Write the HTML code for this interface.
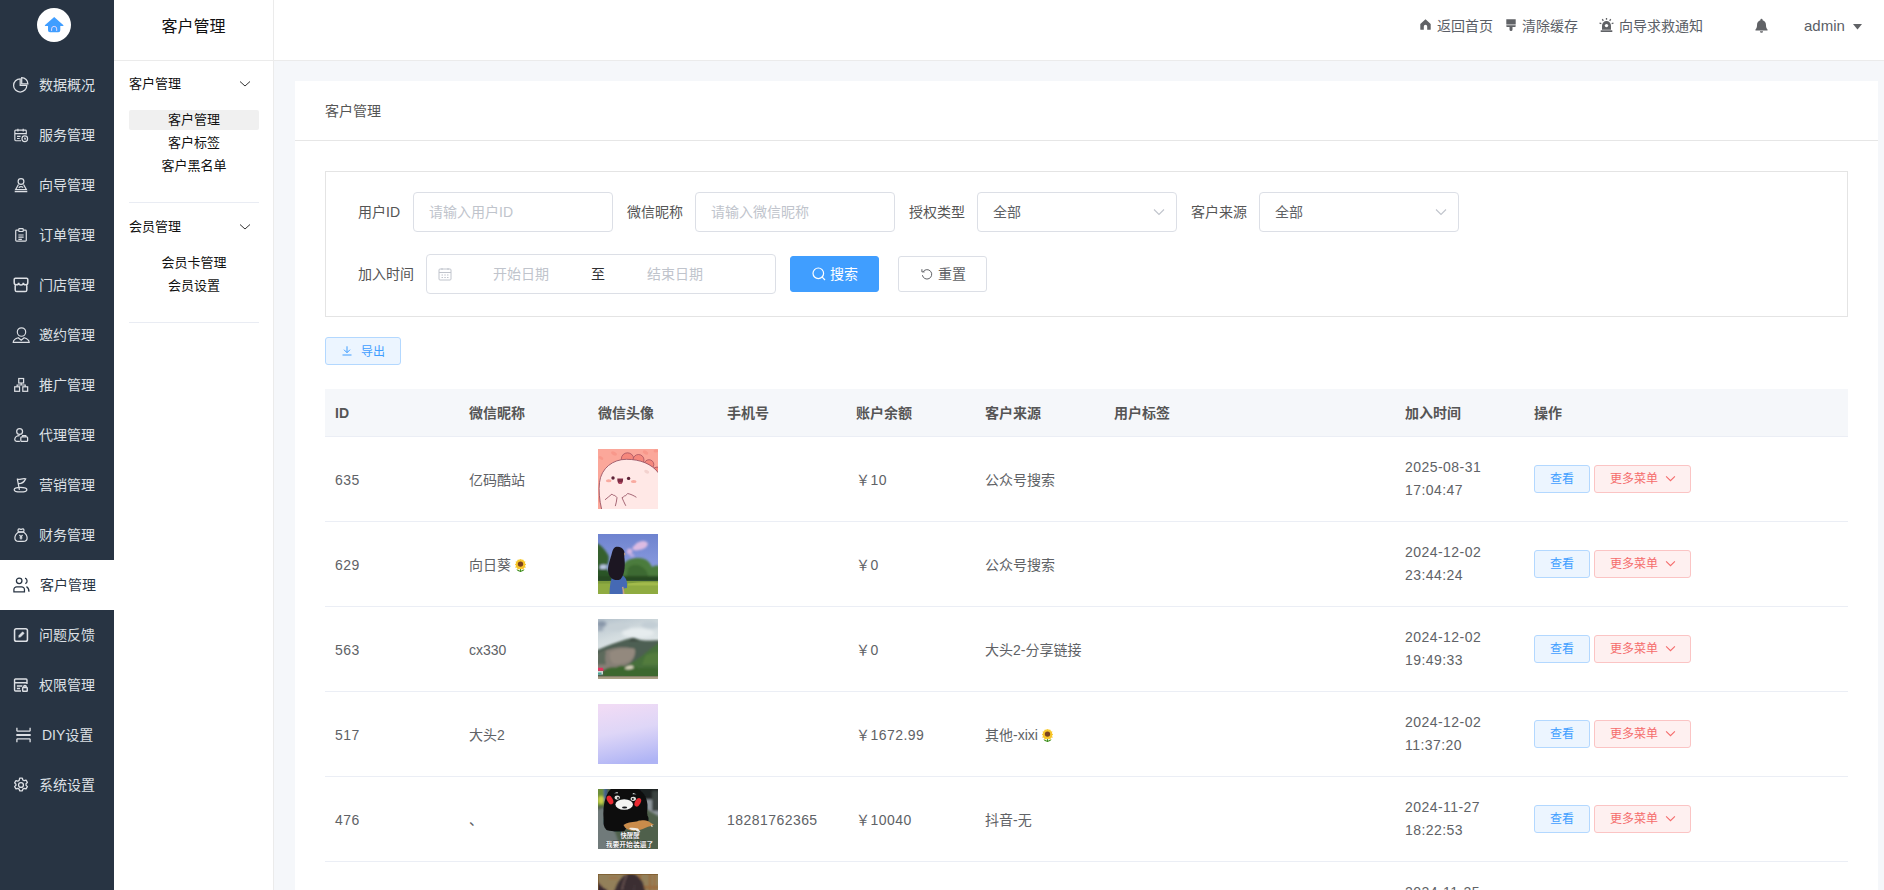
<!DOCTYPE html>
<html lang="zh-CN">
<head>
<meta charset="utf-8">
<title>客户管理</title>
<style>
*{box-sizing:border-box;}
html,body{margin:0;padding:0;}
body{width:1884px;height:890px;overflow:hidden;position:relative;background:#f5f7fa;
 font-family:"Liberation Sans","Noto Sans CJK SC",sans-serif;font-size:14px;color:#606266;}
/* ---------- left dark sidebar ---------- */
#side{position:absolute;left:0;top:0;width:114px;height:890px;background:#283443;}
#logo{position:absolute;left:37px;top:8px;width:34px;height:34px;border-radius:50%;background:#fff;}
#logo svg{position:absolute;left:8px;top:8px;}
.nav{position:absolute;left:0;width:114px;height:50px;color:#dde0e5;font-size:14px;line-height:50px;white-space:nowrap;}
.nav.on{background:#fff;color:#283443;}
.nav svg{position:absolute;left:12px;top:16px;width:18px;height:18px;}
.nav span{position:absolute;left:39px;top:0;}
/* ---------- sub sidebar ---------- */
#sub{position:absolute;left:114px;top:0;width:160px;height:890px;background:#fff;border-right:1px solid #ebebeb;}
#sub .ttl{height:61px;line-height:54px;text-align:center;font-size:16px;color:#111;border-bottom:1px solid #ebebeb;}
.grp{margin:0 14px 0 15px;border-bottom:1px solid #e9ecf3;padding-bottom:23px;}
.grp .gt{height:48px;line-height:48px;font-size:13px;color:#111;position:relative;margin-bottom:2px;}
.grp .gt svg{position:absolute;right:8px;top:20px;}
.ttl + .grp{margin-top:-1px;}
.grp .it{height:20px;line-height:20px;margin-bottom:3px;text-align:center;font-size:13px;color:#111;border-radius:2px;}
.grp .it.on{background:#f0f0f0;}
/* ---------- header ---------- */
#hd{position:absolute;left:274px;top:0;width:1610px;height:61px;background:#fff;border-bottom:1px solid #ebebeb;}
#hd .h{position:absolute;top:0;height:52px;line-height:52px;font-size:14px;color:#5a5e66;white-space:nowrap;}
#hd svg{position:absolute;}
/* ---------- card ---------- */
#card{position:absolute;left:295px;top:81px;width:1583px;height:820px;background:#fff;}
#card .ch{height:60px;line-height:60px;padding-left:30px;border-bottom:1px solid #e6e6e6;font-size:14px;color:#555;}
#fbox{position:absolute;left:30px;top:90px;width:1523px;height:146px;border:1px solid #e4e4e4;}
.lb{position:absolute;height:40px;line-height:40px;font-size:14px;color:#555;white-space:nowrap;}
.inp{position:absolute;height:40px;width:200px;border:1px solid #dcdfe6;border-radius:4px;background:#fff;line-height:38px;padding-left:15px;font-size:14px;color:#c0c4cc;white-space:nowrap;}
.inp.sel{color:#606266;}
.inp svg{position:absolute;}
.btn{position:absolute;height:36px;border-radius:3px;font-size:14px;line-height:34px;white-space:nowrap;}
#exp{position:absolute;left:30px;top:256px;width:76px;height:28px;border:1px solid #b3d8ff;background:#ecf5ff;border-radius:3px;color:#409eff;font-size:12px;line-height:26px;}
#exp svg{position:absolute;left:16px;top:8px;}
#exp span{position:absolute;left:35px;top:1px;}
/* ---------- table ---------- */
#tb{position:absolute;left:30px;top:308px;width:1523px;}
.th{height:48px;background:#f5f7fa;border-bottom:1px solid #ebeef5;position:relative;font-weight:bold;color:#555;font-size:14px;line-height:49px;}
.tr{height:85px;border-bottom:1px solid #ebeef5;position:relative;font-size:14px;color:#606266;line-height:86px;}
.c{position:absolute;top:0;white-space:nowrap;}
.c1{left:10px}.c2{left:144px}.c3{left:273px}.c4{left:402px}.c5{left:531px}.c6{left:660px}.c7{left:789px}.c8{left:1080px}.c9{left:1209px}
.tr .c8{line-height:23px;top:19px;}
.sun{vertical-align:-2.500px;margin-left:4px;}
.n{letter-spacing:.45px;}
.av{position:absolute;left:273px;top:12px;width:60px;height:60px;overflow:hidden;}
.b1,.b2{position:absolute;top:28px;height:28px;border-radius:3px;font-size:12px;line-height:26px;text-align:center;}
.b1{left:1209px;width:56px;background:#ecf5ff;border:1px solid #b3d8ff;color:#409eff;}
.b2{left:1269px;width:97px;background:#fef0f0;border:1px solid #fbc4c4;color:#f56c6c;padding-right:17px;}
.b2 svg{position:absolute;right:14px;top:7px;width:11px;height:11px;}
</style>
</head>
<body>
<div id="side">
<div id="logo"><svg width="34" height="34" viewBox="0 0 34 34" style="left:0;top:0"><path d="M17.200 9L26.200 17a.55.55 0 0 1-.4 1H23.300v4.300a2 2 0 0 1-2 2H13a2 2 0 0 1-2-2V18H8.500a.55.55 0 0 1-.4-1z" fill="#409eff"/><path d="M14.600 22.900v-2a2.550 2.550 0 0 1 5.100 0v2" fill="none" stroke="#e3d8fb" stroke-width="1"/></svg></div>
<div class="nav" style="top:60px"><svg viewBox="0 0 18 18" style="left:12px" fill="none" stroke="currentColor" stroke-width="1.25"><g transform="translate(9 9) scale(1) translate(-9 -9)"><path d="M8.200 2.800A6.600 6.600 0 1 0 14.800 9.400H8.200z"/><path d="M9.700 1.700A6.200 6.200 0 0 1 15.900 7.900H9.700z"/></g></svg><span style="left:39px">数据概况</span></div>
<div class="nav" style="top:110px"><svg viewBox="0 0 18 18" style="left:12px" fill="none" stroke="currentColor" stroke-width="1.35"><g transform="translate(9 9) scale(0.88) translate(-9 -9)"><path d="M9 15.5H3a1 1 0 0 1-1-1V4.5a1 1 0 0 1 1-1h11a1 1 0 0 1 1 1V8.5M2 7.5h13M5.5 2v3M11.5 2v3M4.5 10.5h4M4.5 13h3"/><circle cx="13.3" cy="13.3" r="3.2"/><path d="M13.3 11.8v1.7h1.4"/></g></svg><span style="left:39px">服务管理</span></div>
<div class="nav" style="top:160px"><svg viewBox="0 0 18 18" style="left:12px" fill="none" stroke="currentColor" stroke-width="1.35"><g transform="translate(9 9) scale(0.9) translate(-9 -9)"><circle cx="9" cy="5" r="3.2"/><path d="M6.2 8.5L3 14.2h12L11.8 8.5M2 16.3h14M6.5 12c1.2-1.2 3-1.6 5-.3"/></g></svg><span style="left:39px">向导管理</span></div>
<div class="nav" style="top:210px"><svg viewBox="0 0 18 18" style="left:12px" fill="none" stroke="currentColor" stroke-width="1.35"><g transform="translate(9 9) scale(0.88) translate(-9 -9)"><path d="M6.5 3.5H4a1 1 0 0 0-1 1V15a1 1 0 0 0 1 1h10a1 1 0 0 0 1-1V4.5a1 1 0 0 0-1-1h-2.5"/><rect x="6.5" y="1.8" width="5" height="3.2" rx=".6"/><path d="M6 9h6M6 11.5h6M6 14h4"/></g></svg><span style="left:39px">订单管理</span></div>
<div class="nav" style="top:260px"><svg viewBox="0 0 18 18" style="left:12px" fill="none" stroke="currentColor" stroke-width="1.5"><g transform="translate(9 9) scale(1) translate(-9 -9)"><path d="M2.2 3.5a1.2 1.2 0 0 1 1.2-1.2h11.2a1.2 1.2 0 0 1 1.2 1.2v3a2.2 2.2 0 0 1-4.5.2 2.3 2.3 0 0 1-4.6 0 2.2 2.2 0 0 1-4.5-.2zM3.2 8.5V14a1.6 1.6 0 0 0 1.6 1.6h8.4a1.6 1.6 0 0 0 1.6-1.6V8.5"/></g></svg><span style="left:39px">门店管理</span></div>
<div class="nav" style="top:310px"><svg viewBox="0 0 18 18" style="left:12px" fill="none" stroke="currentColor" stroke-width="1.15"><g transform="translate(9 9) scale(1) translate(-9 -9)"><circle cx="9.5" cy="6" r="4.2"/><path d="M1.5 16.3c.3-2.6 2.6-4 5-4.6l3 2.6 3-2.6c2.4.6 4.7 2 5 4.6z" transform="translate(-.3 0)"/></g></svg><span style="left:39px">邀约管理</span></div>
<div class="nav" style="top:360px"><svg viewBox="0 0 18 18" style="left:12px" fill="none" stroke="currentColor" stroke-width="1.35"><g transform="translate(9 9) scale(0.9) translate(-9 -9)"><rect x="6.5" y="1.8" width="5.4" height="5"/><rect x="2" y="11" width="5.4" height="5"/><rect x="11" y="11" width="5.4" height="5"/><path d="M9.2 6.8v2.2M4.7 11V9h9v2"/></g></svg><span style="left:39px">推广管理</span></div>
<div class="nav" style="top:410px"><svg viewBox="0 0 18 18" style="left:12px" fill="none" stroke="currentColor" stroke-width="1.35"><g transform="translate(9 9) scale(0.92) translate(-9 -9)"><circle cx="7.5" cy="5.2" r="3.2"/><path d="M7.5 9.6c-3 0-5.3 1.9-5.3 4.4 0 1 .8 1.8 2 1.8h3.6"/><rect x="8.8" y="11" width="7.4" height="5" rx="1"/><path d="M10.8 11V9.8h3.4V11"/></g></svg><span style="left:39px">代理管理</span></div>
<div class="nav" style="top:460px"><svg viewBox="0 0 18 18" style="left:12px" fill="none" stroke="currentColor" stroke-width="1.35"><g transform="translate(9 9) scale(0.93) translate(-9 -9)"><ellipse cx="8.5" cy="14" rx="6.8" ry="2.4"/><path d="M7.3 14.3L5 2.2M5 2.6c2.5 1.6 5 -1.2 9-.2-1.2 2.4-3 5.4-7.600 5.200"/></g></svg><span style="left:39px">营销管理</span></div>
<div class="nav" style="top:510px"><svg viewBox="0 0 18 18" style="left:12px" fill="none" stroke="currentColor" stroke-width="1.35"><g transform="translate(9 9) scale(0.9) translate(-9 -9)"><path d="M6.300 5.800C3.800 7.500 2.200 10 2.200 12.400c0 2.400 1.800 3.800 4.300 3.800h5c2.500 0 4.300-1.400 4.300-3.800 0-2.400-1.600-4.900-4.100-6.600z"/><path d="M6.200 5.600c-.9-1.600-.6-3.400 .8-3.400.8 0 1.200.6 2 .6s1.200-.6 2-.6c1.400 0 1.700 1.800.8 3.400z"/><path d="M7.300 9l1.700 2 1.700-2M9 11v3M7.500 12.300h3"/></g></svg><span style="left:39px">财务管理</span></div>
<div class="nav on" style="top:560px"><svg viewBox="0 0 18 18" style="left:12px" fill="none" stroke="currentColor" stroke-width="1.3"><g transform="translate(9 9) scale(0.96) translate(-9 -9)"><circle cx="7.100" cy="4.700" r="2.900"/><path d="M1.600 16.100v-2.300a2.900 2.900 0 0 1 2.900-2.900h5.200a2.900 2.900 0 0 1 2.900 2.900v2.300z"/><path d="M13.200 1.900c2.800 1 2.800 4.700 .3 5.600M14.700 10.700c1.700.9 2.600 2.600 2.600 5.300"/></g></svg><span style="left:40px">客户管理</span></div>
<div class="nav" style="top:610px"><svg viewBox="0 0 18 18" style="left:12px" fill="none" stroke="currentColor" stroke-width="1.7"><g transform="translate(9 9) scale(0.92) translate(-9 -9)"><rect x="2" y="2.200" width="14" height="13.600" rx="2"/><path d="M6.500 11.500l.5-2.200 3.800-3.800 1.700 1.700-3.800 3.800z" fill="currentColor" stroke-width=".6"/></g></svg><span style="left:39px">问题反馈</span></div>
<div class="nav" style="top:660px"><svg viewBox="0 0 18 18" style="left:12px" fill="none" stroke="currentColor" stroke-width="1.55"><g transform="translate(9 9) scale(0.92) translate(-9 -9)"><path d="M9 15.500H3a1 1 0 0 1-1-1V3.500a1 1 0 0 1 1-1h11.500a1 1 0 0 1 1 1V8M2 6.500h13.500M4.500 10h6M4.500 12.800h3.500"/><rect x="10.800" y="11.800" width="5" height="4" rx=".6"/><path d="M12 11.800v-1a1.300 1.300 0 0 1 2.600 0v1"/></g></svg><span style="left:39px">权限管理</span></div>
<div class="nav" style="top:710px"><svg viewBox="0 0 18 18" style="left:14px" fill="none" stroke="currentColor" stroke-width="1.35"><g transform="translate(9 9) scale(1) translate(-9 -9)"><path d="M2.900 1.800V5.200M16.100 1.800V5.200M2.900 5.200H16.100M2.900 12.800H16.100M2.900 12.800V16.200M16.100 12.800V16.200" stroke-width="1.300"/><path d="M2.300 9H16.700" stroke-width="2"/></g></svg><span style="left:42px">DIY设置</span></div>
<div class="nav" style="top:760px"><svg viewBox="0 0 18 18" style="left:12px" fill="none" stroke="currentColor" stroke-width="1.35"><g transform="translate(9 9) scale(0.95) translate(-9 -9)"><circle cx="9" cy="9" r="2.600"/><path d="M7.600 1.800h2.800l.5 1.900 1.500.8 1.900-.6 1.400 2.400-1.400 1.400v1.600l1.400 1.400-1.400 2.400-1.900-.6-1.500.8-.5 1.900H7.600l-.5-1.900-1.500-.8-1.900.6-1.400-2.400 1.400-1.400V8.200L2.300 6.800l1.400-2.400 1.900.6 1.500-.8z" stroke-linejoin="round"/></g></svg><span style="left:39px">系统设置</span></div>
</div>
<div id="sub">
  <div class="ttl">客户管理</div>
  <div class="grp"><div class="gt">客户管理<svg width="12" height="8" viewBox="0 0 12 8" fill="none" stroke="#333" stroke-width="1"><path d="M1 1.500l5 4.500 5-4.500"/></svg></div>
    <div class="it on">客户管理</div><div class="it">客户标签</div><div class="it">客户黑名单</div></div>
  <div class="grp"><div class="gt">会员管理<svg width="12" height="8" viewBox="0 0 12 8" fill="none" stroke="#333" stroke-width="1"><path d="M1 1.500l5 4.500 5-4.500"/></svg></div>
    <div class="it">会员卡管理</div><div class="it">会员设置</div></div>
</div>
<div id="hd">
  <svg style="left:1146px;top:19px" width="11" height="11" viewBox="0 0 11 11"><path d="M5.500 .3L.3 5v5.200a.5.500 0 0 0 .5.500h3V7.500a1.700 1.700 0 0 1 3.400 0v3.200h3a.5.500 0 0 0 .5-.5V5z" fill="#606266"/></svg>
  <div class="h" style="left:1163px">返回首页</div>
  <svg style="left:1232px;top:19px" width="10" height="12" viewBox="0 0 10 12"><path d="M.3 .3h9.400v5.200H.3zM.3 6.300h9.400v1a.8.800 0 0 1-.8.800H6.500v2.400a1.500 1.500 0 0 1-3 0V8.100H1.100a.8.800 0 0 1-.8-.8z" fill="#606266"/></svg>
  <div class="h" style="left:1248px">清除缓存</div>
  <svg style="left:1325px;top:17px" width="15" height="16" viewBox="0 0 15 16"><path d="M3 12.800V8.600a4.500 4.500 0 0 1 9 0v4.200z" fill="#606266"/><circle cx="7.500" cy="8.600" r="1.700" fill="#fff"/><rect x="1.700" y="13.300" width="11.600" height="1.700" fill="#606266"/><path d="M7.500 .9v1.900M3.300 2.200l1 1.600M11.700 2.200l-1 1.600M.5 6l1.800 .7M14.500 6l-1.800 .7" stroke="#606266" stroke-width="1.300" fill="none"/></svg>
  <div class="h" style="left:1345px">向导求救通知</div>
  <svg style="left:1480.500px;top:17.500px" width="13" height="15" viewBox="0 0 14 16" preserveAspectRatio="none"><path d="M7 .8a1.200 1.200 0 0 1 1.200 1.200v.3c2.300.6 3.600 2.500 3.600 4.900 0 3 .7 4 1.700 5v1H.5v-1c1-1 1.700-2 1.700-5 0-2.400 1.300-4.300 3.600-4.900v-.3A1.200 1.200 0 0 1 7 .8zM5.300 14h3.400a1.700 1.700 0 0 1-3.400 0z" fill="#606266"/></svg>
  <div class="h" style="left:1530px;font-size:15px">admin</div>
  <svg style="left:1579px;top:24px" width="9" height="6" viewBox="0 0 9 6"><path d="M0 0h9L4.500 5.500z" fill="#606266"/></svg>
</div>
<div id="card">
  <div class="ch">客户管理</div>
  <div id="fbox">
  <div class="lb" style="left:32px;top:20px">用户ID</div>
  <div class="inp" style="left:87px;top:20px">请输入用户ID</div>
  <div class="lb" style="left:301px;top:20px">微信昵称</div>
  <div class="inp" style="left:369px;top:20px">请输入微信昵称</div>
  <div class="lb" style="left:583px;top:20px">授权类型</div>
  <div class="inp sel" style="left:651px;top:20px">全部<svg style="right:11px;top:15px" width="12" height="8" viewBox="0 0 12 8" fill="none" stroke="#c0c4cc" stroke-width="1.100"><path d="M1 1.500l5 5 5-5"/></svg></div>
  <div class="lb" style="left:865px;top:20px">客户来源</div>
  <div class="inp sel" style="left:933px;top:20px">全部<svg style="right:11px;top:15px" width="12" height="8" viewBox="0 0 12 8" fill="none" stroke="#c0c4cc" stroke-width="1.100"><path d="M1 1.500l5 5 5-5"/></svg></div>
  <div class="lb" style="left:32px;top:82px">加入时间</div>
  <div class="inp" style="left:100px;top:82px;width:350px;padding:0">
    <svg style="left:11px;top:12px" width="14" height="14" viewBox="0 0 14 14" fill="none" stroke="#c0c4cc" stroke-width="1"><rect x="1" y="2" width="12" height="11" rx="1"/><path d="M1 5.500h12M4 1v2M10 1v2M3.500 8h1.500M6.300 8h1.500M9 8h1.500M3.500 10.500h1.500M6.300 10.500h1.500M9 10.500h1.500"/></svg>
    <span style="position:absolute;left:66px;top:0">开始日期</span>
    <span style="position:absolute;left:164px;top:0;color:#303133">至</span>
    <span style="position:absolute;left:220px;top:0">结束日期</span>
  </div>
  <div class="btn" style="left:464px;top:84px;width:89px;background:#409eff;border:1px solid #409eff;color:#fff">
    <svg style="position:absolute;left:21px;top:10px" width="14" height="14" viewBox="0 0 14 14" fill="none" stroke="#fff" stroke-width="1.200"><circle cx="6.300" cy="6.300" r="5.300"/><path d="M10.200 10.200l2.800 2.800"/></svg>
    <span style="position:absolute;left:39px;top:0">搜索</span>
  </div>
  <div class="btn" style="left:572px;top:84px;width:89px;background:#fff;border:1px solid #dcdfe6;color:#606266">
    <svg style="position:absolute;left:22px;top:11px" width="12" height="12" viewBox="0 0 12 12" fill="none" stroke="#606266" stroke-width="1"><path d="M2.200 3.600A4.700 4.700 0 1 1 1.400 7.200"/><path d="M.9 1.200v2.700h2.700"/></svg>
    <span style="position:absolute;left:39px;top:0">重置</span>
  </div>
</div>
<div id="exp"><svg width="10" height="10" viewBox="0 0 10 10" fill="none" stroke="#409eff" stroke-width="1"><path d="M5 .3v6.200M2 3.700l3 3 3-3M.5 9h9"/></svg><span>导出</span></div>
  <div id="tb">
<div class="th"><span class="c c1">ID</span><span class="c c2">微信昵称</span><span class="c c3">微信头像</span><span class="c c4">手机号</span><span class="c c5">账户余额</span><span class="c c6">客户来源</span><span class="c c7">用户标签</span><span class="c c8">加入时间</span><span class="c c9">操作</span></div>
<div class="tr"><span class="c c1 n">635</span><span class="c c2">亿码酷站</span><div class="av"><svg width="60" height="60" viewBox="0 0 60 60"><rect width="60" height="60" fill="#fba79a"/><g fill="#f8988b"><ellipse cx="16" cy="4.500" rx="3.200" ry="1.800" transform="rotate(30 16 4.500)"/><ellipse cx="47.500" cy="3.500" rx="3" ry="1.800" transform="rotate(30 47.500 3.500)"/><ellipse cx="3" cy="9" rx="2.500" ry="1.500" transform="rotate(30 3 9)"/><ellipse cx="2.500" cy="50" rx="2.200" ry="3.500"/><ellipse cx="58" cy="2" rx="2.500" ry="1.500"/></g><g fill="#f5877c" stroke="#9c4a5a" stroke-width=".7"><circle cx="29.500" cy="10" r="6.200"/><circle cx="40.500" cy="11" r="5.500"/><circle cx="51" cy="15.500" r="4.800"/><circle cx="59" cy="22" r="4"/></g><path d="M3.700 60.500C1.300 51 .6 41 1.500 33.500 3.200 19 15 10.300 28.500 10.300 42 10.300 54 15 60.500 24V60.500z" fill="#ffe8e6" stroke="#8e4558" stroke-width=".8"/><ellipse cx="48.700" cy="22.700" rx="2.600" ry="1.700" fill="#f3d2cf" transform="rotate(25 48.700 22.700)"/><circle cx="15" cy="29" r="1.700" fill="#5c2338"/><circle cx="30.600" cy="29.400" r="1.700" fill="#5c2338"/><ellipse cx="10.700" cy="31.800" rx="2.800" ry="1.500" fill="#f9aaa0"/><ellipse cx="35.700" cy="32.500" rx="2.800" ry="1.500" fill="#f9aaa0"/><path d="M19.300 29.400h5.800c.2 3.800-1.100 5.600-2.900 5.600s-3.100-1.800-2.900-5.600z" fill="#7d2a42"/><path d="M22.200 35c-.9 0-1.500-.5-1.900-1.200 1.200-.8 2.600-.8 3.800 0-.4 .7-1 1.200-1.900 1.200z" fill="#c4506a"/><path d="M7 50.800c2.500-1.800 4.500-4 7-5.800 .7 1 1.300 1.400 2.200 1.300 1 .3 2 1.300 2.800 2.400-.3 3-1 6-1.700 8.400M27.800 56.800c-1.300-2.600-2.700-5.500-3.800-8.100 .9-.3 1.700-.9 2.300-1.700 1 .2 2.100-.9 3.300-2.500 3 .6 6 2 8.800 3.800" fill="none" stroke="#8e4558" stroke-width=".8"/></svg></div><span class="c c4 n"></span><span class="c c5 n">￥10</span><span class="c c6">公众号搜索</span><span class="c c8 n">2025-08-31<br>17:04:47</span><div class="b1">查看</div><div class="b2">更多菜单<svg width="10" height="10" viewBox="0 0 10 10" fill="none" stroke="#f56c6c" stroke-width="1"><path d="M1 3l4 4 4-4"/></svg></div></div>
<div class="tr"><span class="c c1 n">629</span><span class="c c2">向日葵<svg class="sun" width="11" height="14" viewBox="0 0 12 15"><title>🌻</title><path d="M6 9v5" stroke="#3f8f1d" stroke-width="1.300"/><path d="M1.600 11c1 3.600 7.800 3.600 8.800 0-1.600 .3-3 1-4.400 2-1.400-1-2.800-1.700-4.400-2z" fill="#3f8f1d"/><g fill="#fbd23c"><circle cx="6" cy="5.400" r="5.200"/></g><g fill="#f7c52a"><path transform="translate(0 -.3)" d="M6 0l1 2.200L9 .8l.2 2.400 2.300-.2-1 2.200 2.100 .9-1.900 1.400 1.300 2-2.400 .2-.2 2.400-2-1.300L6 11.400l-1.400-.6-2 1.300-.2-2.400L0 9.500l1.300-2L-.6 6.100l2.100-.9-1-2.200 2.300 .2L3 .8l2 1.400z"/></g><circle cx="6" cy="5.400" r="2.900" fill="#7a4320"/></svg></span><div class="av"><svg width="60" height="60" viewBox="0 0 60 60"><defs><linearGradient id="g2" x1="0" y1="0" x2="0" y2="1"><stop offset="0" stop-color="#6e83cf"/><stop offset=".7" stop-color="#8fa0e2"/></linearGradient><filter id="b2" x="-10%" y="-10%" width="120%" height="120%"><feGaussianBlur stdDeviation=".9"/></filter><filter id="b2s"><feGaussianBlur stdDeviation=".5"/></filter></defs><rect width="60" height="60" fill="url(#g2)"/><g filter="url(#b2)"><ellipse cx="43" cy="11.500" rx="7" ry="4" fill="#dcbbe2" transform="rotate(-18 43 11.500)"/><ellipse cx="38" cy="14" rx="3.500" ry="2.500" fill="#dcbbe2"/><ellipse cx="31.500" cy="17.500" rx="2.800" ry="3" fill="#d4b6e2"/><ellipse cx="34" cy="21.500" rx="2.500" ry="1.300" fill="#c3b0e2"/><path d="M-2 9c4 1 9 6 12.500 12.500 1 4-.5 8-1.500 11l2 16H-2z" fill="#35602f"/><path d="M2 31.500c2-1.500 5-1.500 7 0l-1 3.500H2z" fill="#b9c6e2"/><path d="M23 48V36c1-7 8-12.500 17-12 7-.5 12 3.500 14 9 2-1.500 5-2 8-1v16z" fill="#4c7c3c"/><path d="M30 34c4-4 10-4 14-1 5 3 7 8 6 13H28z" fill="#3c6a30"/><path d="M-2 36c4-2 9-1 12 1h14v11H-2z" fill="#2c5428"/><path d="M-2 42h64v6H-2z" fill="#274a24"/></g><rect y="47.200" width="60" height="13" fill="#8fab41"/><path d="M0 47.200h60v2.300H0z" fill="#7d9c3a" filter="url(#b2s)"/><path d="M30 49.500c8-1 20-1.500 30-1v3H30z" fill="#a2ba4c" filter="url(#b2s)"/><g filter="url(#b2s)"><path d="M11.500 60.500c0-8 1-15 4-21 5-1 10 1 12.500 5.500 1 2.500 1.300 6 1 9l-3.500 .5.500 6z" fill="#4469b4"/><path d="M24 53c.5 2.500 .8 5 .8 7.500h1.800c-.3-3-.8-5.500-1.200-7.800z" fill="#c9a184"/><path d="M17 13.200c3.500-1.200 7.500 .2 9 3.500 .8 2 .6 4 .3 6 .5 4 .8 8 .2 12-.5 4-1.500 8-4 10.500-3 1.500-7 1-9.500-1.500-3-3.500-3.500-8-2.500-12.500 1-4.500 2.500-8.500 3.500-12.500 .5-2.500 1.500-4.500 3-5.500z" fill="#1b1923"/><path d="M26 18.500c.8 .3 1.300 1 1.300 2l-.9 1.500z" fill="#c9a184"/></g></svg></div><span class="c c4 n"></span><span class="c c5 n">￥0</span><span class="c c6">公众号搜索</span><span class="c c8 n">2024-12-02<br>23:44:24</span><div class="b1">查看</div><div class="b2">更多菜单<svg width="10" height="10" viewBox="0 0 10 10" fill="none" stroke="#f56c6c" stroke-width="1"><path d="M1 3l4 4 4-4"/></svg></div></div>
<div class="tr"><span class="c c1 n">563</span><span class="c c2">cx330</span><div class="av"><svg width="60" height="60" viewBox="0 0 60 60"><defs><linearGradient id="g3" x1="0" y1="0" x2=".3" y2="1"><stop offset="0" stop-color="#b4c1cb"/><stop offset=".35" stop-color="#d3dcdf"/><stop offset=".6" stop-color="#dfe6e8"/></linearGradient><filter id="b3" x="-10%" y="-10%" width="120%" height="120%"><feGaussianBlur stdDeviation=".8"/></filter><filter id="b3b" x="-20%" y="-20%" width="140%" height="140%"><feGaussianBlur stdDeviation="1.800"/></filter></defs><rect width="60" height="60" fill="url(#g3)"/><g filter="url(#b3b)"><ellipse cx="3.500" cy="5" rx="5" ry="3" fill="#8795a8"/><ellipse cx="2" cy="10" rx="3.500" ry="1.800" fill="#95a2b2"/><ellipse cx="40" cy="14" rx="16" ry="5" fill="#e6ecee"/><ellipse cx="20" cy="8" rx="12" ry="4" fill="#c6d0d6"/><ellipse cx="52" cy="6" rx="9" ry="4" fill="#c3ced5"/></g><g filter="url(#b3)"><path d="M-2 31.500C4 29 12 25.500 20 23c5-1.500 10-3.500 15.500-4.200 4 1.500 8 2.800 12 2.800 5-.3 10-.6 14.500-.3V62H-2z" fill="#4e5f52"/><path d="M33 19.500c3-.8 6 1 9 2.200-4 .5-8 1-11 .3z" fill="#3c4c42"/><path d="M-2 36c6-3.500 14-6.500 22-7.500 6-.5 12 0 17 1.500 1 5-1 10-5 14-6 4-14 6-22 7-4 .5-8 .3-12 0z" fill="#867f76"/><path d="M12 33c6-3 14-4 24-3.500 2 4 0 9-5 13-5 2-11 3-16 2-3-3-4-7-3-11.500z" fill="#958b80" opacity=".85"/><path d="M0 34c3-1.500 6-2 8-1.500-1 4-1 9 0 13H-2z" fill="#5d6a5c"/><path d="M62 23c-6 4-12 9-18 14-6 4-12 8-18 11.500V62h36z" fill="#47703a"/><path d="M48 36c4-2 9-3 14-2v12H44c1-4 2-7 4-10z" fill="#527c3c"/><path d="M5 52c3-3 8-4.500 13-3.500 3-2 7-2.500 10-1 4-1 9 0 12 2 6-1 14-1 22 .5V58H5z" fill="#3d672e"/><path d="M26.500 49.500c1.500-2.500 5-3.500 8-3l1.500 2.500c-3 1.500-6.500 2-9.500 .5z" fill="#d6cfba"/></g><path d="M0 48.800h4.800l1 3H0z" fill="#e0355f"/><path d="M0 52h5v3.500H0z" fill="#cfd8d3"/><path d="M0 53.500h3.500v2H0z" fill="#4aa79a"/><rect y="57.300" width="60" height="2.700" fill="#aaa085"/><rect y="57.300" width="60" height=".8" fill="#7f7a63"/></svg></div><span class="c c4 n"></span><span class="c c5 n">￥0</span><span class="c c6">大头2-分享链接</span><span class="c c8 n">2024-12-02<br>19:49:33</span><div class="b1">查看</div><div class="b2">更多菜单<svg width="10" height="10" viewBox="0 0 10 10" fill="none" stroke="#f56c6c" stroke-width="1"><path d="M1 3l4 4 4-4"/></svg></div></div>
<div class="tr"><span class="c c1 n">517</span><span class="c c2">大头2</span><div class="av"><svg width="60" height="60" viewBox="0 0 60 60"><defs><linearGradient id="g4" x1=".35" y1="0" x2=".55" y2="1"><stop offset="0" stop-color="#f0dbf5"/><stop offset=".45" stop-color="#ded6f7"/><stop offset=".75" stop-color="#c5c4f6"/><stop offset="1" stop-color="#afb4f5"/></linearGradient></defs><rect width="60" height="60" fill="url(#g4)"/></svg></div><span class="c c4 n"></span><span class="c c5 n">￥1672.99</span><span class="c c6">其他-xixi<svg class="sun" width="11" height="14" viewBox="0 0 12 15"><title>🌻</title><path d="M6 9v5" stroke="#3f8f1d" stroke-width="1.300"/><path d="M1.600 11c1 3.600 7.800 3.600 8.800 0-1.600 .3-3 1-4.400 2-1.400-1-2.800-1.700-4.400-2z" fill="#3f8f1d"/><g fill="#fbd23c"><circle cx="6" cy="5.400" r="5.200"/></g><g fill="#f7c52a"><path transform="translate(0 -.3)" d="M6 0l1 2.200L9 .8l.2 2.400 2.300-.2-1 2.200 2.100 .9-1.900 1.400 1.300 2-2.400 .2-.2 2.400-2-1.300L6 11.400l-1.400-.6-2 1.300-.2-2.400L0 9.500l1.300-2L-.6 6.100l2.100-.9-1-2.200 2.300 .2L3 .8l2 1.400z"/></g><circle cx="6" cy="5.400" r="2.900" fill="#7a4320"/></svg></span><span class="c c8 n">2024-12-02<br>11:37:20</span><div class="b1">查看</div><div class="b2">更多菜单<svg width="10" height="10" viewBox="0 0 10 10" fill="none" stroke="#f56c6c" stroke-width="1"><path d="M1 3l4 4 4-4"/></svg></div></div>
<div class="tr"><span class="c c1 n">476</span><span class="c c2">、</span><div class="av"><svg width="60" height="60" viewBox="0 0 60 60"><defs><filter id="b5" x="-10%" y="-10%" width="120%" height="120%"><feGaussianBlur stdDeviation=".7"/></filter><filter id="b5b" x="-10%" y="-10%" width="120%" height="120%"><feGaussianBlur stdDeviation="1.300"/></filter></defs><rect width="60" height="60" fill="#4f604b"/><g filter="url(#b5b)"><path d="M-2 21L8 18l16 44H-2z" fill="#6f7a7a"/><rect x="30" y="-2" width="32" height="13" fill="#1e2421"/><path d="M42 10.500h20V28c-7-4-14-8-20-13z" fill="#8e959b"/><rect x="54" y="2" width="8" height="20" fill="#3a423f"/><rect x="-2" y="-2" width="8.500" height="19" fill="#6d8f3a"/><ellipse cx="3" cy="11" rx="3" ry="4" fill="#c9d24a"/><rect x="6" y="-2" width="2.800" height="14" fill="#3a5a9a"/></g><g filter="url(#b5)"><path d="M5.500 30C4.500 16 8 3 14 -1h24c8 3 11 10 11.500 17 .3 4-1 7 0 10.500 1.500 3 2 6-1.500 7.500-3 .5-5-1-7-3-2 3-6 4-10 4l-4.500 7c-6 1-13 .5-18-1C5 37 5.500 34 5.500 30z" fill="#0d0f11"/><ellipse cx="12" cy="11" rx="2.800" ry="4.600" fill="#ea2a30" transform="rotate(-28 12 11)"/><ellipse cx="39.800" cy="13.300" rx="2.800" ry="4.600" fill="#ea2a30" transform="rotate(28 39.800 13.300)"/><ellipse cx="26.200" cy="15.500" rx="8.800" ry="5.200" fill="#f3f3f1"/><ellipse cx="26.600" cy="18.500" rx="2.600" ry="1.100" fill="#15171a"/><ellipse cx="19.300" cy="8.600" rx="2.700" ry="2.100" fill="#dfe1dc"/><ellipse cx="35.300" cy="9.800" rx="2.700" ry="2.100" fill="#dfe1dc"/><circle cx="20" cy="8.900" r="1" fill="#15171a"/><circle cx="34.800" cy="10.100" r="1" fill="#15171a"/><path d="M16 4.200l3.500-1.200 .4 1.200zM38.500 5.200L35 4l-.4 1.200z" fill="#e8e8e6"/><path d="M25.500 36c3-2.500 8-2.800 13-3.500 4-.8 8-1.800 11-.5 2 1 4 2.500 6.500 3.500l-3 1.500c-2 .5-4 1-6 2-3 1.500-6 2.500-9 2.500-4 .5-9-.5-11-3z" fill="#c98c4b"/><path d="M31 39c3-.5 6-.3 9 .5l2.500 3.500-2 .5-3-2.500c-2.500 .5-5 0-6.500-2z" fill="#efece6"/><path d="M53 35.500l2 1.800-1.500 .8z" fill="#efece6"/></g><g font-family="'Liberation Sans','Noto Sans CJK SC',sans-serif" font-weight="bold" fill="#f4f4f4" stroke="#1a1a1a" stroke-width=".35" paint-order="stroke" text-anchor="middle"><text x="32" y="49.300" font-size="6.300">快醒醒</text><text x="31.500" y="57.800" font-size="6.800">我要开始装逼了</text></g></svg></div><span class="c c4 n">18281762365</span><span class="c c5 n">￥10040</span><span class="c c6">抖音-无</span><span class="c c8 n">2024-11-27<br>18:22:53</span><div class="b1">查看</div><div class="b2">更多菜单<svg width="10" height="10" viewBox="0 0 10 10" fill="none" stroke="#f56c6c" stroke-width="1"><path d="M1 3l4 4 4-4"/></svg></div></div>
<div class="tr"><span class="c c1 n"></span><span class="c c2"></span><div class="av"><svg width="60" height="60" viewBox="0 0 60 60"><defs><filter id="b6" x="-10%" y="-10%" width="120%" height="120%"><feGaussianBlur stdDeviation=".8"/></filter></defs><rect width="60" height="60" fill="#93805a"/><g filter="url(#b6)"><rect x="41" y="-2" width="2" height="64" fill="#9a6a3c"/><rect x="51" y="-2" width="1.800" height="64" fill="#9a6a3c"/><rect x="55.500" y="-2" width="1.800" height="64" fill="#a07040"/><rect x="46" y="12" width="16" height="2.500" fill="#9a6a3c"/><rect x="11" y="3.500" width="9" height="1" fill="#a8683a"/><path d="M-2 6c3 4 6 8 11 10v46H-2z" fill="#3b2a31"/><path d="M10 62C11 40 14 16 22 6c3-4 7-6.500 10-6.500 5 0 9 3 12 8 5 10 6 30 6 54z" fill="#3a2d31"/><path d="M29 1c-2 4-4 9-5 15" stroke="#8a6f6a" stroke-width=".9" fill="none"/><path d="M36 8c1 8 0 16-1 24z" fill="#55484c"/></g><rect width="60" height=".7" fill="#7a5628"/><rect width=".6" height="60" fill="#7a5628"/></svg></div><span class="c c4 n"></span><span class="c c5 n"></span><span class="c c6"></span><span class="c c8 n">2024-11-25</span><div class="b1">查看</div><div class="b2">更多菜单<svg width="10" height="10" viewBox="0 0 10 10" fill="none" stroke="#f56c6c" stroke-width="1"><path d="M1 3l4 4 4-4"/></svg></div></div>
</div>
</div>
</body>
</html>
